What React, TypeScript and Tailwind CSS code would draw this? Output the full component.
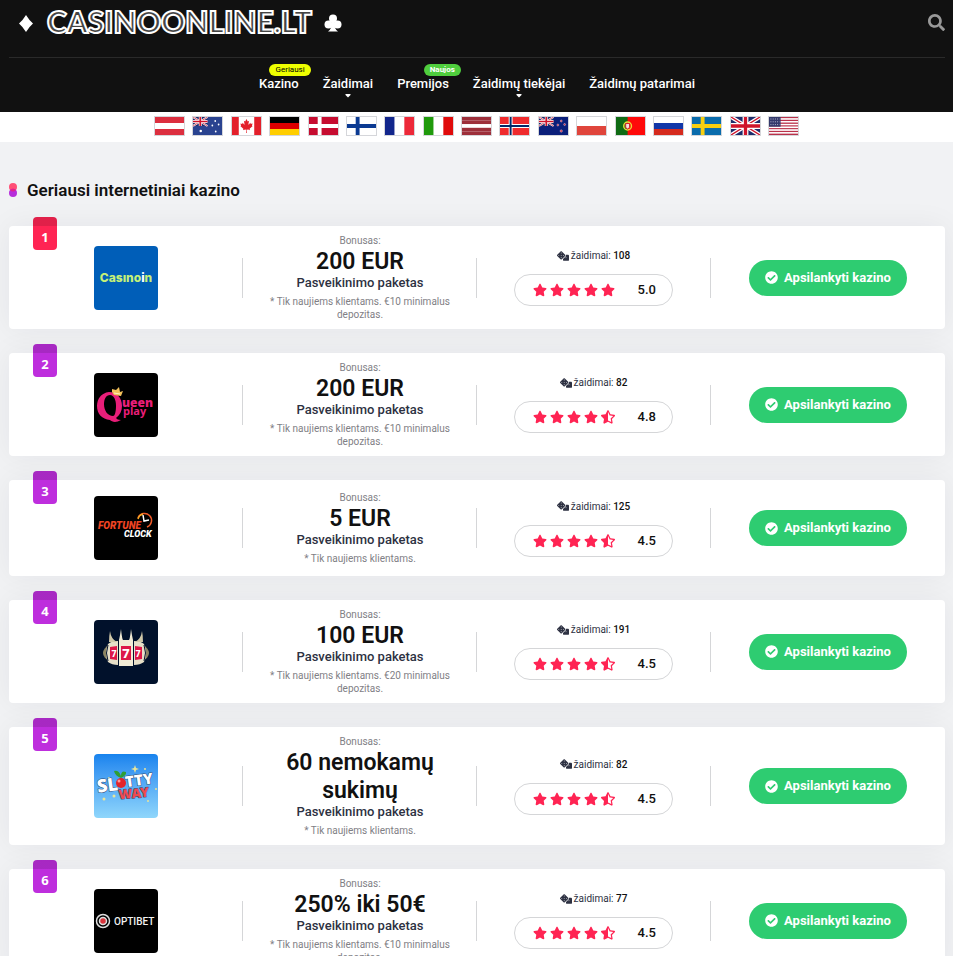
import type { ReactNode } from "react"
import { FaCanadianMapleLeaf, FaCheckCircle, FaDice, FaSearch, FaStar, FaStarHalfAlt } from "react-icons/fa"

const navItems = [
  { label: "Kazino", badge: "Geriausi", badgeClass: "bg-[#eeff00] text-black font-normal" },
  { label: "Žaidimai", caret: true },
  { label: "Premijos", badge: "Naujos", badgeClass: "bg-[#4fce3d] text-white font-bold" },
  { label: "Žaidimų tiekėjai", caret: true },
  { label: "Žaidimų patarimai" },
]

function Stripes({ colors, vertical }: { colors: string[]; vertical?: boolean }) {
  const n = colors.length
  return (
    <>
      {colors.map((c, i) =>
        vertical ? (
          <rect key={i} x={(30 / n) * i} width={30 / n} height="18" fill={c} />
        ) : (
          <rect key={i} y={(18 / n) * i} width="30" height={18 / n} fill={c} />
        )
      )}
    </>
  )
}

function Cross({ bg, outer, inner }: { bg: string; outer: string; inner?: string }) {
  return (
    <>
      <rect width="30" height="18" fill={bg} />
      <path d="M11 0V18M0 9H30" stroke={outer} strokeWidth="4" />
      {inner && <path d="M11 0V18M0 9H30" stroke={inner} strokeWidth="2" />}
    </>
  )
}

function Jack() {
  return (
    <>
      <rect width="30" height="18" fill="#1d2c6b" />
      <path d="M0 0L30 18M30 0L0 18" stroke="#fff" strokeWidth="4" />
      <path d="M0 0L30 18M30 0L0 18" stroke="#cf142b" strokeWidth="1.4" />
      <path d="M15 0V18M0 9H30" stroke="#fff" strokeWidth="6" />
      <path d="M15 0V18M0 9H30" stroke="#cf142b" strokeWidth="3.4" />
    </>
  )
}

const flags: { name: string; art: ReactNode }[] = [
  { name: "Austrija", art: <Stripes colors={["#dc2f3f", "#ffffff", "#dc2f3f"]} /> },
  {
    name: "Australija",
    art: (
      <>
        <rect width="30" height="18" fill="#2a4390" />
        <g transform="scale(.5)"><Jack /></g>
        <g fill="#fff">
          <circle cx="8" cy="14" r="1.3" /><circle cx="23" cy="4" r=".9" /><circle cx="20" cy="8.500" r=".9" />
          <circle cx="26.500" cy="7.500" r=".9" /><circle cx="23.500" cy="14.500" r=".9" />
        </g>
      </>
    ),
  },
  {
    name: "Kanada",
    art: (
      <>
        <rect width="30" height="18" fill="#fff" />
        <path d="M0 0H7V18H0ZM23 0H30V18H23Z" fill="#e3202b" />
        <FaCanadianMapleLeaf x={8} y={2} size={14} color="#e3202b" />
      </>
    ),
  },
  { name: "Vokietija", art: <Stripes colors={["#000000", "#dd0000", "#ffce00"]} /> },
  { name: "Danija", art: <Cross bg="#c60c30" outer="#fff" /> },
  { name: "Suomija", art: <Cross bg="#fff" outer="#0b3a92" /> },
  { name: "Prancūzija", art: <Stripes vertical colors={["#12268c", "#ffffff", "#ed2939"]} /> },
  { name: "Italija", art: <Stripes vertical colors={["#209a0c", "#ffffff", "#e00b0b"]} /> },
  { name: "Latvija", art: <Stripes colors={["#9d2f3a", "#9d2f3a", "#ffffff", "#9d2f3a", "#9d2f3a"]} /> },
  { name: "Norvegija", art: <Cross bg="#ef2b2d" outer="#fff" inner="#002868" /> },
  {
    name: "Naujoji Zelandija",
    art: (
      <>
        <rect width="30" height="18" fill="#0b1f7a" />
        <g transform="scale(.5)"><Jack /></g>
        <g fill="#cc2440" stroke="#fff" strokeWidth=".4">
          <circle cx="23" cy="4" r="1" /><circle cx="19.500" cy="8" r="1" />
          <circle cx="26.500" cy="7.500" r="1" /><circle cx="23" cy="14" r="1.200" />
        </g>
      </>
    ),
  },
  { name: "Lenkija", art: <Stripes colors={["#ffffff", "#e0453c"]} /> },
  {
    name: "Portugalija",
    art: (
      <>
        <rect width="30" height="18" fill="#ff0a0a" />
        <rect width="12" height="18" fill="#0f6b14" />
        <circle cx="12" cy="9" r="4" fill="none" stroke="#e9d93a" strokeWidth="1.500" />
        <path d="M10 6.500H14V10.500L12 12L10 10.500Z" fill="#f3e3e0" stroke="#d8202a" strokeWidth="1" />
      </>
    ),
  },
  { name: "Rusija", art: <Stripes colors={["#ffffff", "#1237a8", "#d52b1e"]} /> },
  { name: "Švedija", art: <Cross bg="#0a6cac" outer="#f8cf10" /> },
  { name: "Jungtinė Karalystė", art: <Jack /> },
  {
    name: "JAV",
    art: (
      <>
        <Stripes
          colors={["#b9314a", "#fff", "#b9314a", "#fff", "#b9314a", "#fff", "#b9314a", "#fff", "#b9314a", "#fff", "#b9314a", "#fff", "#b9314a"]}
        />
        <rect width="12" height="9.700" fill="#343a6c" />
        <path d="M1.500 2H11M1.500 4.800H11M1.500 7.600H11" stroke="#c9cbe0" strokeWidth=".9" strokeDasharray="1 1.300" />
      </>
    ),
  },
]

function CasinoinLogo() {
  return (
    <svg viewBox="0 0 64 64" className="size-16 rounded bg-[#005eb8]">
      <text x="32" y="36" textAnchor="middle" fill="#c5f078" fontSize="12" fontWeight="800" fontFamily="Inter, sans-serif">
        Casıno<tspan fill="#fff">i</tspan>n
      </text>
    </svg>
  )
}

function QueenPlayLogo() {
  return (
    <svg viewBox="0 0 64 64" className="size-16 rounded bg-black">
      <path
        fillRule="evenodd"
        fill="#e91e79"
        d="M15 19C7 20 3 26 3 33C3 41 8 46 16 47C18 49 22 50 27 47C24 47 23 46 22 45C26 42 28 38 28 33C28 25 23 19 15 19ZM16 22C20 22 22 27 22 33C22 38 21 43 19 43C14 43 10 38 10 31C10 26 12 22 16 22Z"
      />
      <path d="M18 19L20 22L27 23L29 18L26 19L25 14L22 17L18 16Z" fill="#f4c25b" />
      <path d="M20 20L26 21" stroke="#fff1c4" />
      <text x="28" y="34" fill="#e91e79" fontSize="12" fontWeight="800" fontFamily="Open Sans, sans-serif">ueen</text>
      <text x="29" y="42" fill="#e91e79" fontSize="11" fontWeight="700" fontFamily="Open Sans, sans-serif">play</text>
    </svg>
  )
}

function FortuneClockLogo() {
  return (
    <svg viewBox="0 0 64 64" className="size-16 rounded bg-black">
      <path d="M44 22A7 7 0 1 1 53 31" fill="none" stroke="#ef5a28" strokeWidth="1.500" />
      <path d="M44 23A7 7 0 0 1 49 18" fill="none" stroke="#f5a623" strokeWidth="1.500" />
      <path d="M49 19L50 25L55 24" fill="none" stroke="#fff" strokeWidth="1.500" />
      <g fontFamily="Roboto, sans-serif" fontStyle="italic" fontWeight="900">
        <text x="4" y="33" fill="#ee4423" fontSize="10">FORTUNE</text>
        <text x="30" y="41" fill="#fff" fontSize="9">CLOCK</text>
      </g>
    </svg>
  )
}

function SevensLogo() {
  return (
    <svg viewBox="0 0 64 64" className="size-16 rounded bg-[#01112b]">
      <ellipse cx="32" cy="33" rx="23" ry="12" fill="#8d8563" />
      <path d="M24 21Q17 21 14 24Q10 33 14 42Q18 45 24 45ZM40 21Q47 21 50 24Q54 33 50 42Q46 45 40 45Z" fill="#e6dfc8" />
      <path d="M14 25Q11 33 14 41M50 25Q53 33 50 41" stroke="#01112b" fill="none" />
      <path d="M16 11Q17 19 23 22H15Q15 16 16 11ZM48 11Q47 19 41 22H49Q49 16 48 11Z" fill="#cfc7a8" />
      <rect x="24" y="19" width="16" height="28" fill="#01112b" />
      <path d="M27 9Q28 19 29 20H35Q36 19 37 9Q38 16 39 20V46H25V20Q26 16 27 9Z" fill="#f1ebd6" />
      <path d="M16 27L23 26V40L16 39ZM41 26L48 27V39L41 40ZM27 26H37V40H27Z" fill="#dd1748" />
      <g fill="#fff" fontFamily="Roboto, sans-serif" fontWeight="900" textAnchor="middle">
        <text x="20" y="37" fontSize="9">7</text>
        <text x="32" y="38" fontSize="13">7</text>
        <text x="44" y="37" fontSize="9">7</text>
      </g>
    </svg>
  )
}

function SlottyWayLogo() {
  return (
    <svg viewBox="0 0 64 64" className="size-16 rounded bg-linear-to-b from-[#1683ee] to-[#8fd6fb]">
      <g fill="#e8e59a">
        <path d="M41 11L42 14L45 15L42 16L41 19L40 16L37 15L40 14Z" />
        <circle cx="51" cy="15" r="1" /><circle cx="10" cy="45" r="1.500" /><circle cx="20" cy="42" r="1.500" />
        <circle cx="15" cy="24" r="1" /><circle cx="54" cy="47" r="1" /><circle cx="62" cy="35" r="1" />
      </g>
      <g fontFamily="Noto Sans, sans-serif" fontWeight="900" strokeLinejoin="round" paintOrder="stroke" stroke="#2a4a73" strokeWidth="1">
        <text transform="rotate(-8 10 38)" x="4" y="38" fill="#fff" fontSize="18">SL</text>
        <text transform="rotate(-8 34 33)" x="32" y="33" fill="#fff" fontSize="15">TTY</text>
        <text transform="rotate(-5 28 45)" x="25" y="45" fill="#f04a4f" fontSize="13">WAY</text>
      </g>
      <circle cx="27" cy="29" r="5" fill="#e3242b" />
      <circle cx="25" cy="27" r="1.500" fill="#ff9b9b" />
      <path d="M27 24Q21 22 20 17Q25 16 27 22Q27 16 32 18Q33 21 27 24Z" fill="#2f9e34" />
    </svg>
  )
}

function OptibetLogo() {
  return (
    <svg viewBox="0 0 64 64" className="size-16 rounded bg-black">
      <circle cx="9" cy="32" r="6.500" fill="none" stroke="#ddd" strokeWidth="1.500" />
      <circle cx="9" cy="32" r="3.500" fill="#d8353c" stroke="#ddd" strokeWidth="1.500" />
      <text x="20" y="36" fill="#f2f2f2" fontSize="10" fontWeight="500" fontFamily="Roboto, sans-serif">OPTIBET</text>
    </svg>
  )
}

const casinos = [
  { logo: <CasinoinLogo />, name: "Casinoin", bonus: "200 EUR", note: "* Tik naujiems klientams. €10 minimalus depozitas.", games: 108, rating: "5.0" },
  { logo: <QueenPlayLogo />, name: "Queen Play", bonus: "200 EUR", note: "* Tik naujiems klientams. €10 minimalus depozitas.", games: 82, rating: "4.8" },
  { logo: <FortuneClockLogo />, name: "Fortune Clock", bonus: "5 EUR", note: "* Tik naujiems klientams.", games: 125, rating: "4.5" },
  { logo: <SevensLogo />, name: "777", bonus: "100 EUR", note: "* Tik naujiems klientams. €20 minimalus depozitas.", games: 191, rating: "4.5" },
  { logo: <SlottyWayLogo />, name: "Slotty Way", bonus: "60 nemokamų sukimų", note: "* Tik naujiems klientams.", games: 82, rating: "4.5" },
  { logo: <OptibetLogo />, name: "Optibet", bonus: "250% iki 50€", note: "* Tik naujiems klientams. €10 minimalus depozitas.", games: 77, rating: "4.5" },
]

function Header() {
  return (
    <header className="bg-[#111] text-white pl-[9px] pr-2">
      <div className="flex justify-between items-center h-[57px] pb-3">
        <a href="#" className="flex items-center gap-3 pl-2">
          <svg viewBox="0 0 18 18" className="size-[18px]" fill="currentColor">
            <path d="M9 1Q12 6 16 9.500Q12 13 9 18Q6 13 2 9.500Q6 6 9 1Z" />
          </svg>
          <span className="font-[Lato] font-black text-[30px] leading-7 pb-1 text-[#444] [-webkit-text-stroke:2px_#fff]">CASINOONLINE.LT</span>
          <svg viewBox="0 0 18 18" className="size-[18px]" fill="currentColor">
            <circle cx="9" cy="4.500" r="4" />
            <circle cx="4.500" cy="10.500" r="4" />
            <circle cx="13.500" cy="10.500" r="4" />
            <path d="M8 7H10Q10 15 14 17.500H4Q8 15 8 7Z" />
          </svg>
        </a>
        <button aria-label="Paieška" className="text-[#999]">
          <FaSearch className="size-[17px]" />
        </button>
      </div>
      <nav className="flex justify-center gap-6 h-[55px] pt-4 border-t border-[#2a2a2a] text-[13px] leading-5 font-medium">
        {navItems.map((item) => (
          <a key={item.label} href="#" className="relative">
            {item.label}
            {item.badge && (
              <span className={`absolute -top-2.5 -right-3 rounded-full px-1.5 text-[8px] leading-3 ${item.badgeClass}`}>
                {item.badge}
              </span>
            )}
            {item.caret && (
              <svg viewBox="0 0 6 4" className="absolute top-5 left-1/2 -translate-x-1/2 w-1.5 h-1" fill="currentColor">
                <path d="M.5 0H5.500V1L3 3.500L.5 1Z" />
              </svg>
            )}
          </a>
        ))}
      </nav>
    </header>
  )
}

function Stars({ rating }: { rating: string }) {
  return (
    <span className="flex gap-[3px] text-[#ff2453]">
      {[1, 2, 3, 4, 5].map((n) =>
        Number(rating) >= n ? <FaStar key={n} className="size-3.5" /> : <FaStarHalfAlt key={n} className="size-3.5" />
      )}
    </span>
  )
}

function Divider() {
  return <span className="absolute right-0 top-1/2 -translate-y-1/2 h-10 w-px bg-[#d5d6d8]" />
}

export default function App() {
  return (
    <div className="min-h-screen bg-[#f1f2f4] font-[Roboto,sans-serif] text-[#111]">
      <Header />

      <div className="bg-white pt-1 pb-1.5">
        <div className="flex justify-between max-w-[645px] mx-auto">
          {flags.map((flag) => (
            <a key={flag.name} href="#" aria-label={flag.name} className="block w-[31px] h-5 border border-[#d5d6da]">
              <svg viewBox="0 0 30 18" preserveAspectRatio="none" className="block w-full h-full">
                {flag.art}
              </svg>
            </a>
          ))}
        </div>
      </div>

      <main className="pt-9 pl-[9px] pr-2 pb-6">
        <h1 className="flex items-center gap-2.5 mb-6 text-[17px] leading-6 font-semibold">
          <svg viewBox="0 0 8 14" className="w-2 h-3.5">
            <circle cx="4" cy="4" r="4" fill="#ff4f75" />
            <circle cx="4" cy="10" r="4" fill="#b62edb" />
            <path d="M1 7Q4 4 7 7Q4 10 1 7Z" fill="#e3208f" />
          </svg>
          Geriausi internetiniai kazino
        </h1>

        <ol className="flex flex-col gap-6">
          {casinos.map((casino, i) => (
            <li key={casino.name} className="relative grid grid-cols-4 items-center rounded bg-white shadow-[0_0_30px_rgba(25,30,45,0.06)]">
              <span
                className={`absolute left-6 -top-[9px] w-6 h-[33px] pt-2 rounded text-center text-white text-[13px] leading-6 font-bold font-[Open_Sans] bg-linear-to-b from-black/12 from-[9px] to-transparent to-[9px] ${i === 0 ? "bg-[#ff2453]" : "bg-[#be2edd]"}`}
              >
                {i + 1}
              </span>

              <div className="relative self-stretch flex items-center justify-center py-4">
                <a href="#" aria-label={casino.name}>{casino.logo}</a>
                <Divider />
              </div>

              <div className="relative self-stretch flex flex-col justify-center px-6 py-2 text-center">
                <span className="text-[10px] leading-[14px] text-[#7f8085]">Bonusas:</span>
                <strong className="text-[23px] leading-7 font-semibold">{casino.bonus}</strong>
                <span className="text-[13px] leading-[14px] font-medium text-[#2d3142]">Pasveikinimo paketas</span>
                <p className="mt-[5px] text-[10px] leading-[13px] text-[#7f8085]">{casino.note}</p>
                <Divider />
              </div>

              <div className="relative self-stretch flex flex-col items-center justify-center gap-3 pr-px">
                <span className="flex items-center gap-0.5 text-[10px] leading-[13px] text-[#2d3142]">
                  <FaDice className="size-3" />
                  <span>žaidimai: <b className="font-medium text-[#111]">{casino.games}</b></span>
                </span>
                <div className="flex items-center justify-between w-[159px] h-8 pl-[18px] pr-4 rounded-full border border-[#d5d6d8]">
                  <Stars rating={casino.rating} />
                  <span className="text-[13px] font-medium">{casino.rating}</span>
                </div>
                <Divider />
              </div>

              <div className="flex justify-center">
                <a href="#" className="flex items-center gap-1.5 h-9 px-4 rounded-full bg-[#2ecc71] text-white text-[13px] font-bold">
                  <FaCheckCircle className="size-[13px]" />
                  Apsilankyti kazino
                </a>
              </div>
            </li>
          ))}
        </ol>
      </main>
    </div>
  )
}
